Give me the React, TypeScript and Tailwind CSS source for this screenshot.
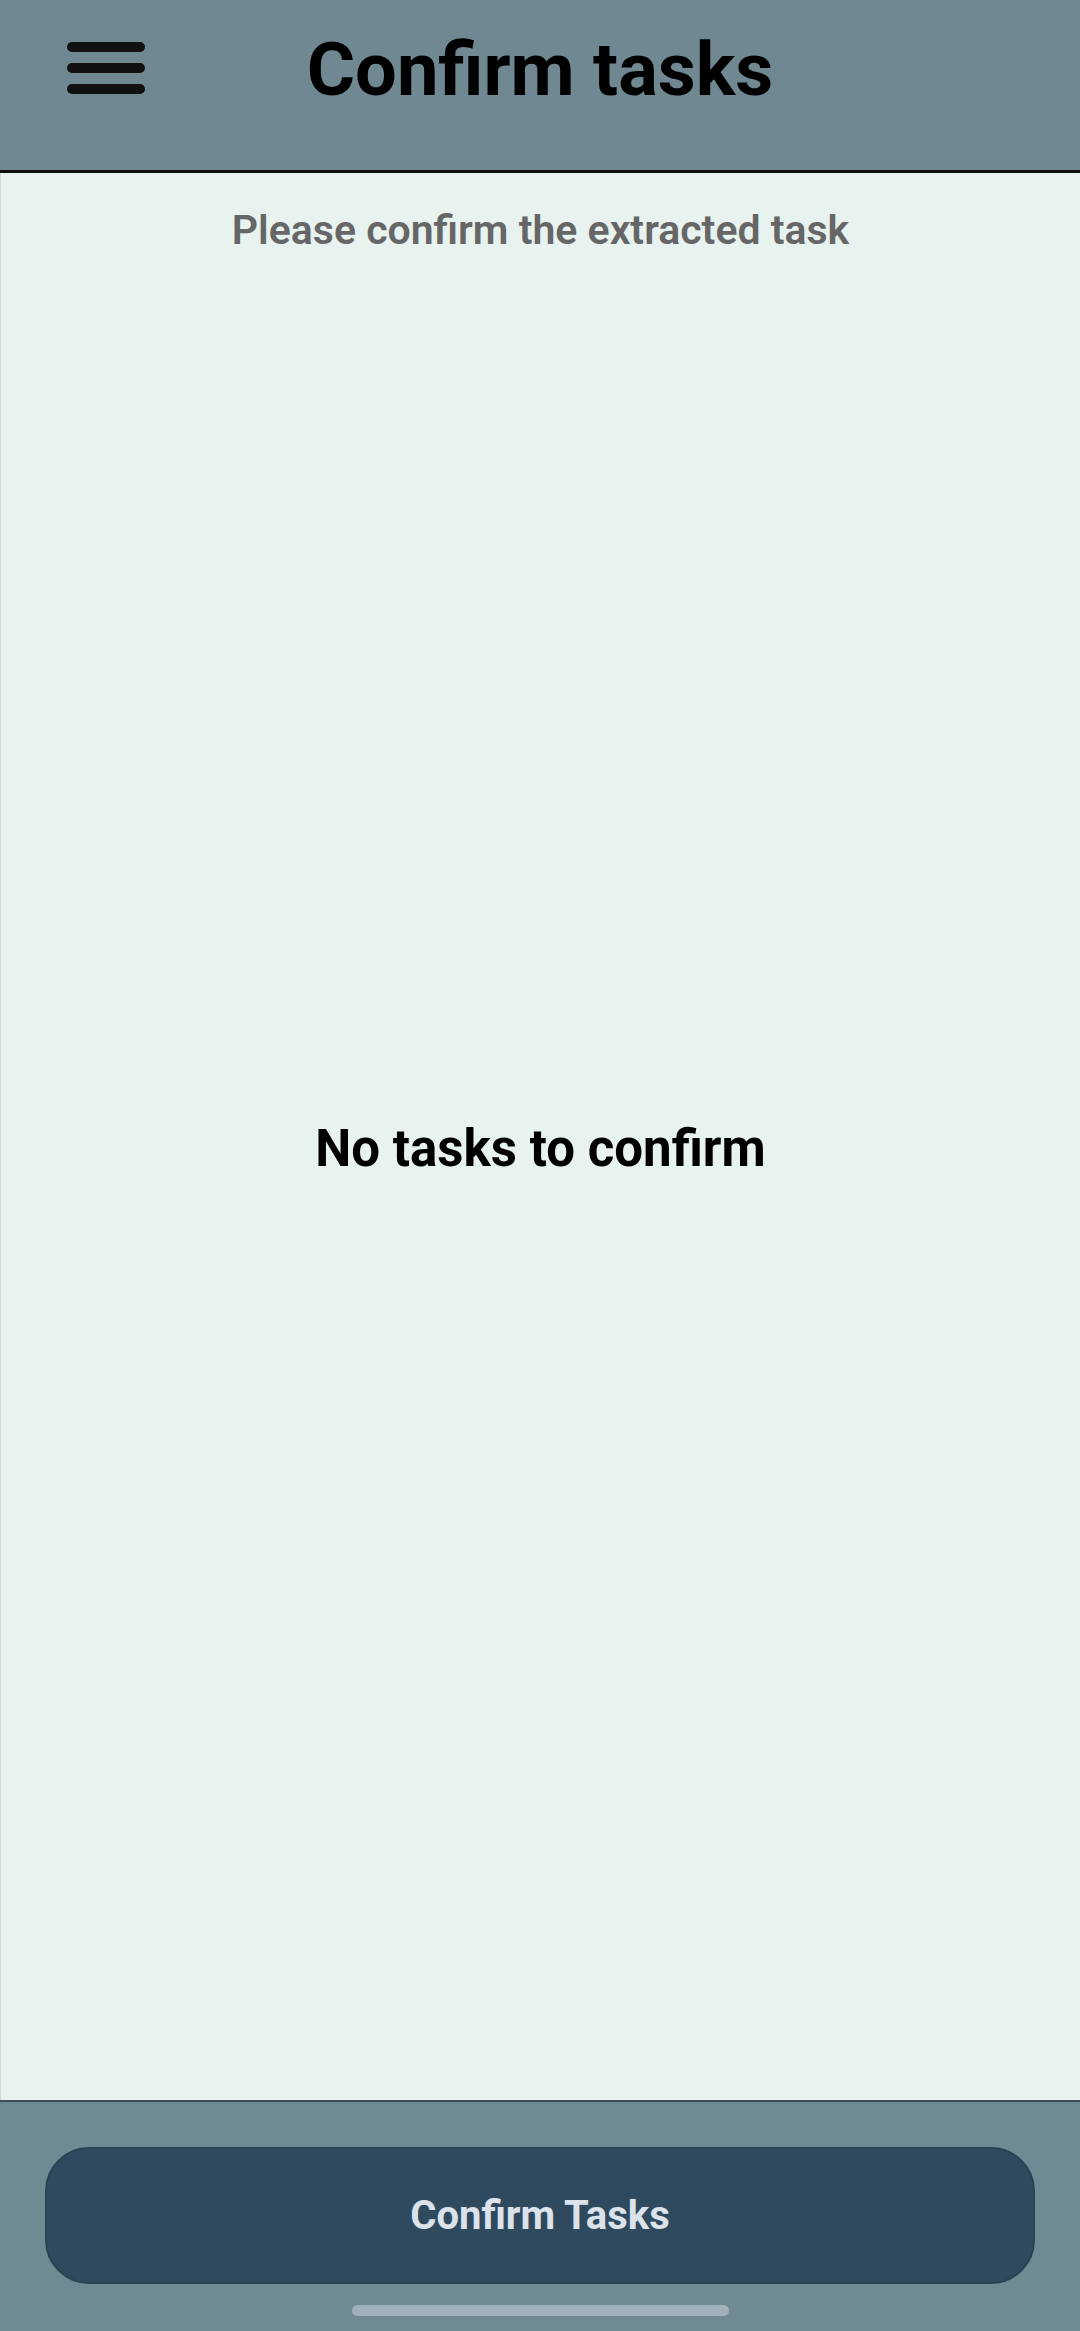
export default function App() {
  return (
    <div
      className="w-[1080px] h-[2331px] flex flex-col bg-[#e8f2ef] overflow-hidden"
      style={{ fontFamily: "Roboto, 'Liberation Sans', sans-serif" }}
    >
      {/* top bar */}
      <header className="relative h-[173px] shrink-0 bg-[#6f8891] border-b-[3px] border-[#111]">
        <button className="absolute left-[67px] top-[42px] w-[78px] h-[52px] flex flex-col justify-between">
          <span className="block h-[10px] w-full rounded-full bg-[#111]" />
          <span className="block h-[10px] w-full rounded-full bg-[#111]" />
          <span className="block h-[10px] w-full rounded-full bg-[#111]" />
        </button>
        <h1 className="pt-[27px] text-center text-[74px] leading-[86px] font-bold text-black">
          Confirm tasks
        </h1>
      </header>

      {/* body */}
      <main className="flex-1 flex flex-col border-l border-[#c9ddd7]">
        <p className="pt-[33px] text-center text-[41px] leading-[48px] font-semibold text-[#666]">
          Please confirm the extracted task
        </p>
        <div className="flex-1 flex items-center justify-center pb-[55px]">
          <p className="text-[51px] font-bold text-black">No tasks to confirm</p>
        </div>
      </main>

      {/* bottom bar */}
      <footer className="h-[231px] shrink-0 bg-[#708a93] border-t-2 border-[#3b4e56] flex flex-col items-center pt-[45px]">
        <button className="w-[990px] h-[137px] rounded-[44px] bg-[#2f4a5e] border-2 border-[#2a4253] text-[40px] font-bold text-[#dbe2ea]">
          Confirm Tasks
        </button>
        <div className="mt-[21px] w-[377px] h-[11px] rounded-full bg-[#a0b1b9]" />
      </footer>
    </div>
  );
}
